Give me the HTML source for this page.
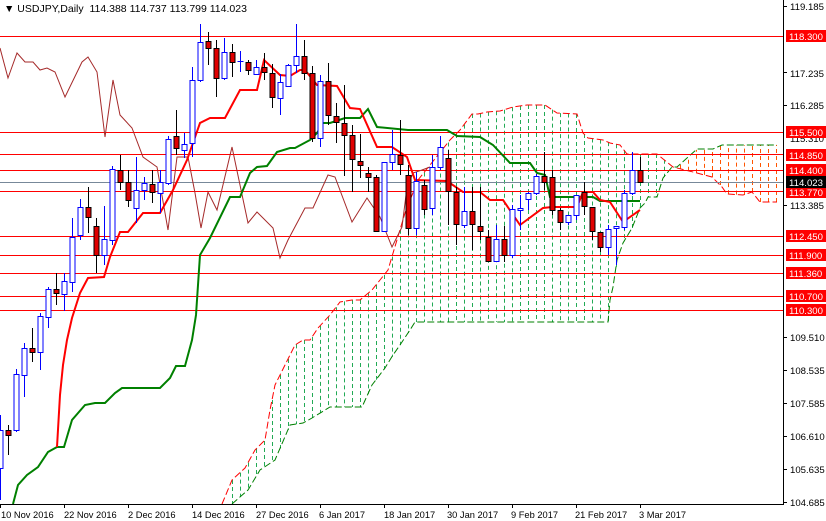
<!DOCTYPE html>
<html><head><meta charset="utf-8"><style>
html,body{margin:0;padding:0;background:#fff;}
svg{display:block;font-family:"Liberation Sans",sans-serif;}
</style></head><body>
<svg id="c" width="826" height="521" xmlns="http://www.w3.org/2000/svg">
<rect width="826" height="521" fill="#fff"/>
<g id="cloud"></g>
<g id="hl" stroke="#ff0000" stroke-width="1">
<line x1="0" y1="36.5" x2="783" y2="36.5"/>
<line x1="0" y1="132.5" x2="783" y2="132.5"/>
<line x1="0" y1="154.5" x2="783" y2="154.5"/>
<line x1="0" y1="170.5" x2="783" y2="170.5"/>
<line x1="0" y1="191.5" x2="783" y2="191.5"/>
<line x1="0" y1="236.5" x2="783" y2="236.5"/>
<line x1="0" y1="255.5" x2="783" y2="255.5"/>
<line x1="0" y1="273.5" x2="783" y2="273.5"/>
<line x1="0" y1="296.5" x2="783" y2="296.5"/>
<line x1="0" y1="310.5" x2="783" y2="310.5"/>
</g>
<line x1="0" y1="182.5" x2="783" y2="182.5" stroke="#778899" stroke-width="1"/>
<g id="lines"></g>
<g id="candles"></g>
<text x="4" y="12" font-size="10.5" fill="#000">▼ USDJPY,Daily&#160; 114.388 114.737 113.799 114.023</text>
<line x1="783.5" y1="0" x2="783.5" y2="505" stroke="#000"/>
<line x1="0" y1="504.5" x2="784" y2="504.5" stroke="#000"/>
<g font-size="9.6" fill="#000">
<text x="790" y="10">119.185</text>
<text x="790" y="77">117.235</text>
<text x="790" y="109">116.285</text>
<text x="790" y="142">115.310</text>
<text x="790" y="209">113.385</text>
<text x="790" y="341">109.510</text>
<text x="790" y="374">108.535</text>
<text x="790" y="407">107.585</text>
<text x="790" y="440">106.610</text>
<text x="790" y="473">105.635</text>
<text x="790" y="506">104.685</text>
</g>
<g stroke="#000">
<line x1="783" y1="6.5" x2="787" y2="6.5"/><line x1="783" y1="72.5" x2="787" y2="72.5"/>
<line x1="783" y1="105.5" x2="787" y2="105.5"/><line x1="783" y1="205.5" x2="787" y2="205.5"/>
<line x1="783" y1="337.5" x2="787" y2="337.5"/><line x1="783" y1="370.5" x2="787" y2="370.5"/>
<line x1="783" y1="403.5" x2="787" y2="403.5"/><line x1="783" y1="436.5" x2="787" y2="436.5"/>
<line x1="783" y1="469.5" x2="787" y2="469.5"/><line x1="783" y1="502.5" x2="787" y2="502.5"/>
</g>
<g id="labels" font-size="9.6" fill="#fff"></g>
<g font-size="9.3" fill="#000">
<text x="1" y="518">10 Nov 2016</text>
<text x="64" y="518">22 Nov 2016</text>
<text x="128" y="518">2 Dec 2016</text>
<text x="192" y="518">14 Dec 2016</text>
<text x="256" y="518">27 Dec 2016</text>
<text x="319" y="518">6 Jan 2017</text>
<text x="384" y="518">18 Jan 2017</text>
<text x="447" y="518">30 Jan 2017</text>
<text x="511" y="518">9 Feb 2017</text>
<text x="575" y="518">21 Feb 2017</text>
<text x="639" y="518">3 Mar 2017</text>
</g>
<g stroke="#000">
<line x1="0.5" y1="504" x2="0.5" y2="508"/><line x1="64.5" y1="504" x2="64.5" y2="508"/>
<line x1="128.5" y1="504" x2="128.5" y2="508"/><line x1="192.5" y1="504" x2="192.5" y2="508"/>
<line x1="256.5" y1="504" x2="256.5" y2="508"/><line x1="320.5" y1="504" x2="320.5" y2="508"/>
<line x1="384.5" y1="504" x2="384.5" y2="508"/><line x1="448.5" y1="504" x2="448.5" y2="508"/>
<line x1="512.5" y1="504" x2="512.5" y2="508"/><line x1="576.5" y1="504" x2="576.5" y2="508"/>
<line x1="640.5" y1="504" x2="640.5" y2="508"/>
</g>
</svg>
<script>
var NS="http://www.w3.org/2000/svg";
function el(p,t,a){var e=document.createElementNS(NS,t);for(var k in a)e.setAttribute(k,a[k]);p.appendChild(e);return e;}
function interp(pts,x){if(x<pts[0][0]||x>pts[pts.length-1][0])return null;for(var i=1;i<pts.length;i++){if(x<=pts[i][0]){var a=pts[i-1],b=pts[i];var t=(b[0]==a[0])?0:(x-a[0])/(b[0]-a[0]);return a[1]+t*(b[1]-a[1]);}}return null;}
function pl(g,pts,col,w,dash){var a={points:pts.map(function(p){return p.join(",")}).join(" "),fill:"none",stroke:col,"stroke-width":w};if(dash)a["stroke-dasharray"]=dash;el(g,"polyline",a);}
var A=[[222,504],[232,480],[245,468],[255,450],[265,440],[270,410],[275,385],[285,365],[295,345],[303,340],[310,340],[318,328],[330,315],[340,302],[352,300],[360,300],[372,290],[380,280],[388,270],[405,213],[418,180],[430,165],[450,140],[460,130],[472,114],[478,114],[487,112],[500,111],[513,107],[527,105],[545,105],[557,113],[577,114],[583,133],[588,138],[603,140],[610,143],[620,145],[627,154],[657,154],[673,167],[697,173],[712,177],[722,187],[727,194],[743,195],[752,192],[760,202],[777,202]];
var B=[[232,504],[248,490],[260,470],[275,460],[290,425],[303,423],[312,418],[330,407],[345,407],[362,407],[372,385],[385,368],[393,355],[400,345],[410,330],[415,322],[608,322],[610,300],[613,287],[617,260],[623,243],[632,228],[640,208],[645,203],[648,197],[657,197],[663,178],[672,167],[677,167],[697,149],[713,149],[722,145],[777,145]];
var cg=document.getElementById("cloud");
for(var x=232;x<=776;x+=8){var a=interp(A,x),b=interp(B,x);if(a==null||b==null)continue;var col=a<b?"#22aa55":"#ff5500";el(cg,"line",{x1:x+0.5,x2:x+0.5,y1:a,y2:b,stroke:col,"stroke-width":1,"stroke-dasharray":"4,3"});}
pl(cg,A,"#ff0000",1,"7,3");pl(cg,B,"#008000",1,"7,3");
var lg=document.getElementById("lines");
var CH=[[0,48],[8,78],[17,53],[25,62],[33,62],[40,70],[47,68],[55,72],[65,97],[82,62],[88,57],[97,72],[105,137],[113,80],[120,115],[132,128],[143,157],[157,167],[168,230],[177,157],[188,157],[195,193],[201,228],[208,192],[217,210],[232,147],[248,223],[257,212],[273,228],[280,258],[288,240],[305,208],[313,208],[328,175],[335,177],[352,222],[367,198],[380,217],[392,247],[402,227],[407,187],[413,173],[422,170],[430,167]];
pl(lg,CH,"#a52a2a",1);
var TK=[[57,447],[60,395],[63,365],[67,340],[72,318],[80,293],[88,278],[104,277],[110,257],[120,232],[128,232],[143,213],[160,213],[173,190],[187,160],[200,123],[210,118],[225,118],[240,90],[257,90],[264,60],[280,75],[290,76],[300,70],[305,70],[317,85],[337,86],[350,108],[360,109],[377,147],[392,147],[407,157],[415,180],[447,181],[463,192],[480,192],[490,200],[503,200],[520,225],[543,208],[552,207],[577,207],[583,192],[593,192],[600,200],[610,202],[623,222],[640,210]];
var KJ=[[13,504],[18,485],[27,475],[38,467],[48,452],[57,447],[64,447],[72,420],[85,405],[95,403],[105,403],[115,393],[122,388],[160,388],[170,378],[176,366],[185,366],[192,340],[196,315],[200,255],[210,238],[230,197],[240,197],[250,173],[257,167],[267,166],[277,152],[290,148],[295,148],[310,140],[317,133],[323,123],[330,123],[345,118],[360,118],[368,109],[377,127],[408,130],[447,130],[457,136],[480,137],[493,145],[510,163],[530,163],[537,173],[545,175],[550,197],[593,197],[600,201],[640,201]];
pl(lg,KJ,"#008000",2);pl(lg,TK,"#ff0000",2);
var C=[[468,415,500,430],[430,425,455,435],[430,369,432,374],[375,343,397,348],[348,328,362,352],[352,313,370,316],[317,287,328,289],[289,273,305,293],[294,273,311,281],[282,218,292,237],[235,199,240,207],[207,187,233,217],[226,218,273,255],[255,206,265,239],[240,166,245,169],[170,155,190,182],[182,170,207,200],[208,157,223,190],[190,177,200,183],[184,170,203,192],[193,170,213,182],[183,136,185,139],[136,110,155,148],[150,133,158,144],[143,67,157,80],[80,24,82,42],[41,32,65,48],[48,40,97,78],[78,38,80,52],[52,44,77,62],[62,51,72,61],[62,60,75,70],[74,60,75,67],[67,53,80,72],[73,64,108,97],[98,74,115,82],[86,64,87,65],[65,24,73,56],[56,40,80,73],[73,66,142,138],[138,75,147,81],[81,63,125,115],[116,103,143,122],[123,85,176,135],[135,125,192,159],[161,134,178,165],[173,167,192,177],[177,175,231,231],[231,162,232,162],[162,130,170,154],[155,120,175,164],[175,165,235,228],[228,172,235,181],[185,180,215,209],[208,155,215,167],[167,136,170,147],[158,150,225,191],[192,187,245,224],[225,187,228,211],[211,187,250,224],[226,187,240,231],[237,230,262,261],[261,225,262,239],[239,226,262,255],[255,205,258,209],[210,195,230,208],[199,192,210,193],[193,174,195,176],[176,152,190,182],[177,170,215,210],[210,208,230,222],[222,215,225,215],[215,195,220,195],[192,182,215,206],[207,207,240,231],[232,232,252,247],[247,225,255,229],[228,226,265,226],[227,190,230,193],[193,152,195,170],[170,157,182,182]];
var kg=document.getElementById("candles");
C.forEach(function(c,i){var x=8*i+0.5;var o=c[0],h=c[1],l=c[2],cl=c[3];var bull=cl<o;var wc=bull?"#0000ff":"#000";
el(kg,"line",{x1:x,x2:x,y1:h,y2:l,stroke:wc,"stroke-width":1});
var top=Math.min(o,cl),bot=Math.max(o,cl);if(bot-top<1)bot=top+1;
if(bot-top<=1){el(kg,"line",{x1:x-3,x2:x+3,y1:top+0.5,y2:top+0.5,stroke:wc});}
else el(kg,"rect",{x:x-2.5,y:top+0.5,width:5,height:bot-top,fill:bull?"#fff":"#e00000",stroke:wc,"stroke-width":1});});
var lb=document.getElementById("labels");
[["118.300",36],["115.500",132],["114.850",155],["114.400",170],["113.770",192],["112.450",236],["111.900",255],["111.360",273],["110.700",296],["110.300",310],["114.023",182,"#000"]].forEach(function(L){var y=L[1];var col=L[2]||"#ff0000";
el(lb,"rect",{x:786,y:y-6,width:40,height:12,fill:col});var t=el(lb,"text",{x:789,y:y+4});t.textContent=L[0];});
</script>
</body></html>
